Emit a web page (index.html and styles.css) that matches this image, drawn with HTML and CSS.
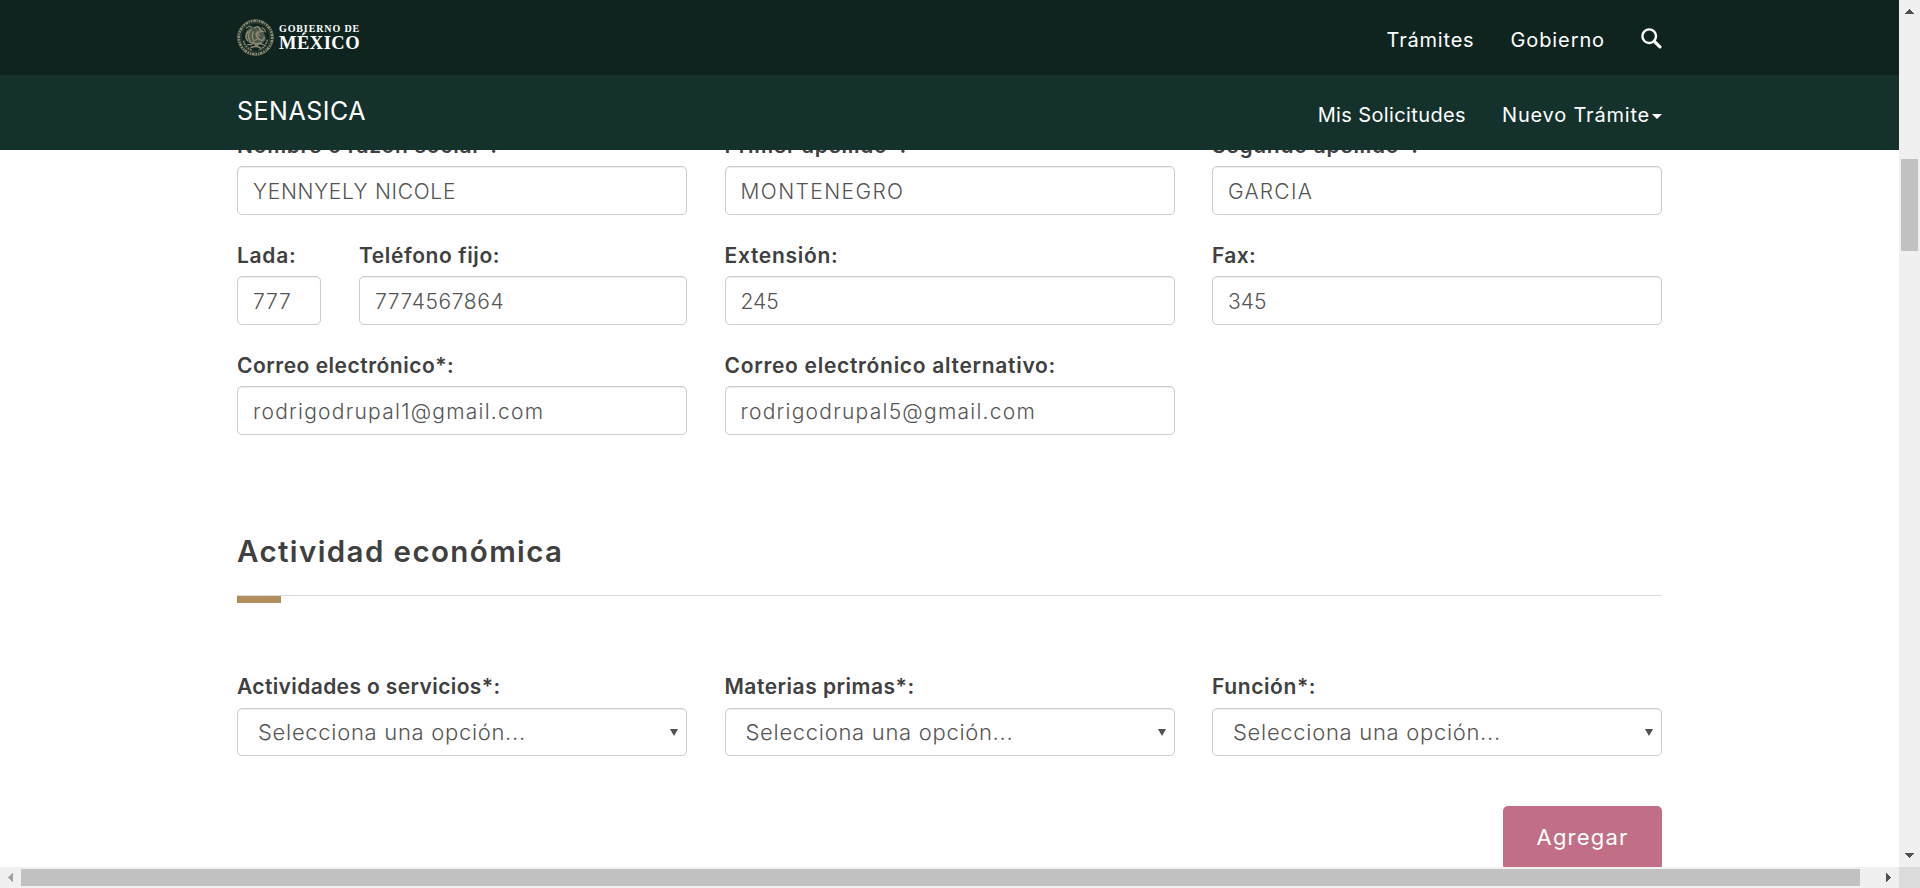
FILE: index.html
```
<!DOCTYPE html>
<html lang="es">
<head>
<meta charset="utf-8">
<title>SENASICA</title>
<link rel="stylesheet" href="styles.css">
</head>
<body>
<div class="window">
  <div class="page">
    <header class="header">
      <div class="bar bar-top">
        <a class="brand">
          <svg class="seal" viewBox="0 0 36 36" fill="none" stroke="#8d8b72">
            <circle cx="18" cy="18" r="16.2" stroke-width="2.6" stroke-dasharray="1.7 .8 2.6 .7 1.2 .9"/>
            <circle cx="18" cy="18" r="17.5" stroke-width=".6" opacity=".6"/>
            <circle cx="18" cy="18" r="14" stroke-width=".5" opacity=".5"/>
            <path fill="#8d8b72" fill-opacity=".5" stroke="none" d="M9 12c3-4 7-5 10-4 4 0 7 2 7 5l2 5c0 4-3 6-7 6l-9-1c-4-2-5-7-3-11z"/>
            <path stroke-width="1.5" d="M6.500 21c1 5 4 8 8 9.300M29.500 20c-1 5.500-4 8.500-8.500 10" stroke-dasharray="2 .7"/>
            <path stroke-width="1.300" d="M11 12c-3 3-3 7-.5 9.500M13.500 10c-3 4-3 8-.5 11.500M16 12c-2 4-1.500 7 1 10M17 9c3-3 6-1 5 1.500l3 1.500-3.500.5c-2 1-1 3 1 4M20 12c-2 3-1 6 2 8s5 0 4-3M12 22c3 2 7 3 12 1M10 25h4l2-2 3 3 3-2 4 1M13 28c3-1.500 7-1.500 10 0"/>
            <path stroke-width="1" d="M18 14l3 5-4 2M24 8c2 1 3.500 3 4 5M9 9l3-2 3 1"/>
          </svg>
          <span class="brand-text">
            <span class="brand-small">GOBIERNO DE</span>
            <span class="brand-big">MÉXICO</span>
          </span>
        </a>
        <nav class="nav">
          <a class="track-8">Trámites</a>
          <a class="track-9">Gobierno</a>
          <svg class="search" viewBox="0 0 21 21" fill="none" stroke="#fff">
            <circle cx="8.200" cy="8.200" r="6.800" stroke-width="2.400"/>
            <path d="M13.300 13.300l5.600 5.600" stroke-width="3.200" stroke-linecap="round"/>
          </svg>
        </nav>
      </div>
      <div class="bar bar-sub">
        <a class="site track-5">SENASICA</a>
        <nav class="nav">
          <a class="track-4">Mis Solicitudes</a>
          <a class="menu track-8">Nuevo Trámite<i class="caret"></i></a>
        </nav>
      </div>
    </header>
    <main class="content">
      <div class="grid">
        <div class="field"><label class="label track-7">Nombre o razón social*:</label><div class="input track-7">YENNYELY NICOLE</div></div>
        <div class="field"><label class="label track-7">Primer apellido*:</label><div class="input track-14">MONTENEGRO</div></div>
        <div class="field"><label class="label track-7">Segundo apellido*:</label><div class="input track-13">GARCIA</div></div>
        <div class="phone">
          <div class="field"><label class="label track-7">Lada:</label><div class="input track-8">777</div></div>
          <div class="field"><label class="label track-6">Teléfono fijo:</label><div class="input track-6">7774567864</div></div>
        </div>
        <div class="field"><label class="label track-7">Extensión:</label><div class="input">245</div></div>
        <div class="field"><label class="label track-4">Fax:</label><div class="input">345</div></div>
        <div class="field"><label class="label track-5">Correo electrónico*:</label><div class="input track-13">rodrigodrupal1@gmail.com</div></div>
        <div class="field"><label class="label track-7">Correo electrónico alternativo:</label><div class="input track-13">rodrigodrupal5@gmail.com</div></div>
      </div>
      <h3 class="title">Actividad económica</h3>
      <div class="rule"><div class="accent"></div></div>
      <div class="grid grid-select">
        <div class="field"><label class="label track-4">Actividades o servicios*:</label><div class="select track-7">Selecciona una opción...<i class="arrow"></i></div></div>
        <div class="field"><label class="label track-5">Materias primas*:</label><div class="select track-7">Selecciona una opción...<i class="arrow"></i></div></div>
        <div class="field"><label class="label track-6">Función*:</label><div class="select track-7">Selecciona una opción...<i class="arrow"></i></div></div>
      </div>
      <div class="actions"><button class="button track-12">Agregar</button></div>
    </main>
  </div>
  <div class="scroll-y">
    <svg class="tip" viewBox="0 0 21 21"><path d="M6 14h9v-1h-1v-1h-1v-1h-1v-1h-1V9h-1v1H9v1H8v1H7v1H6z" fill="#505050"/></svg>
    <div class="thumb-y"></div>
    <svg class="tip tip-end" viewBox="0 0 21 21"><path d="M6 7h9v1h-1v1h-1v1h-1v1h-1v1h-1v-1H9v-1H8V9H7V8H6z" fill="#505050"/></svg>
  </div>
  <div class="scroll-x">
    <svg class="tip" viewBox="0 0 21 21"><path d="M13 6v9h-1v-1h-1v-1h-1v-1H9v-1H8v-1h1V9h1V8h1V7h1V6z" fill="#a3a3a3"/></svg>
    <div class="thumb-x"></div>
    <svg class="tip tip-end" viewBox="0 0 21 21"><path d="M8 6v9h1v-1h1v-1h1v-1h1v-1h1v-1h-1V9h-1V8h-1V7H9V6z" fill="#505050"/></svg>
  </div>
  <div class="corner"></div>
</div>
</body>
</html>
```
FILE: styles.css
```
* { box-sizing: border-box; }

body {
  margin: 0;
  overflow: hidden;
  font-family: Inter, "Open Sans", sans-serif;
  color: #404041;
  background: #fff;
}

.window {
  display: grid;
  grid-template: 867px 21px / 1899px 21px;
  width: 1920px;
  height: 888px;
}

.page { overflow: hidden; background: #fff; }

/* Header */
.header { position: relative; z-index: 1; color: #fff; }
.bar {
  display: flex;
  align-items: center;
  justify-content: space-between;
  height: 75px;
  padding: 0 237px;
}
.bar-top { background: #0f241f; }
.bar-sub { background: #14312b; }

.brand { display: flex; gap: 5px; align-items: center; }
.seal { width: 37px; height: 37px; display: block; }
.brand-text {
  display: flex;
  flex-direction: column;
  font-family: "Liberation Serif", serif;
  font-weight: 700;
}
.brand-small { font-size: 10px; line-height: 10px; letter-spacing: .88px; }
.brand-big { font-size: 18.5px; line-height: 18px; letter-spacing: .5px; }

.nav {
  display: flex;
  align-items: flex-start;
  gap: 36px;
  padding-top: 5px;
  font-size: 20px;
  line-height: 24px;
}
.search { width: 21px; height: 21px; }
.menu { display: flex; align-items: center; gap: 2px; }
.caret {
  border: 5px solid transparent;
  border-top-color: #fff;
  border-bottom: 0;
  margin-top: 3px;
}
.site { font-size: 25px; line-height: 30px; padding-bottom: 4px; }

/* Form */
.content { padding: 0 237px; margin-top: -19px; }
.grid {
  display: grid;
  grid-template-columns: repeat(3, 450px);
  justify-content: space-between;
  row-gap: 26px;
}
.phone { display: grid; grid-template-columns: 84px 328px; justify-content: space-between; }
.label {
  display: block;
  font-size: 21px;
  line-height: 30px;
  font-weight: 600;
  margin-bottom: 5px;
  white-space: nowrap;
}
.input, .select {
  border: 1px solid #ccc;
  border-radius: 5px;
  box-shadow: inset 0 1px 1px rgba(0, 0, 0, .075);
  color: #555;
  font-weight: 300;
  background: #fff;
}
.input { height: 49px; padding: 1px 15px 0; font-size: 21px; line-height: 48px; }
.select {
  display: flex;
  align-items: center;
  justify-content: space-between;
  height: 48px;
  padding: 0 8px 0 20px;
  font-size: 22px;
}
.arrow {
  border: 4px solid transparent;
  border-top: 7px solid #505050;
  border-bottom: 0;
}

.title {
  margin: 96px 0 24px;
  font-size: 29.5px;
  line-height: 40px;
  font-weight: 600;
  letter-spacing: 1.4px;
}
.rule { border-top: 1px solid #ddd; height: 77px; }
.accent { width: 44px; height: 7px; background: #b38e5d; }
.grid-select .label { margin-bottom: 6px; }

.actions { display: flex; justify-content: flex-end; margin-top: 50px; }
.button {
  width: 159px;
  height: 64px;
  padding-bottom: 3px;
  border: 0;
  border-radius: 5px;
  background: #c06f87;
  color: #fff;
  font: 400 22px Inter, sans-serif;
}

/* Letter spacing */
.track-4 { letter-spacing: .38px; }
.track-5 { letter-spacing: .5px; }
.track-6 { letter-spacing: .6px; }
.track-7 { letter-spacing: .7px; }
.track-8 { letter-spacing: .8px; }
.track-9 { letter-spacing: .9px; }
.track-12 { letter-spacing: 1.2px; }
.track-13 { letter-spacing: 1.25px; }
.track-14 { letter-spacing: 1.4px; }

/* Scrollbars */
.scroll-y { display: flex; flex-direction: column; align-items: center; background: #f0f0f0; }
.scroll-x { display: flex; align-items: center; background: #f0f0f0; }
.tip { flex: none; width: 21px; height: 21px; display: block; }
.thumb-y { width: 17px; height: 92px; margin-top: 138px; background: #c1c1c1; }
.thumb-x { width: 1839px; height: 17px; background: #c1c1c1; }
.scroll-y .tip-end { margin-top: auto; }
.scroll-x .tip-end { margin-left: auto; }
.corner { background: #dcdcdc; }
```
